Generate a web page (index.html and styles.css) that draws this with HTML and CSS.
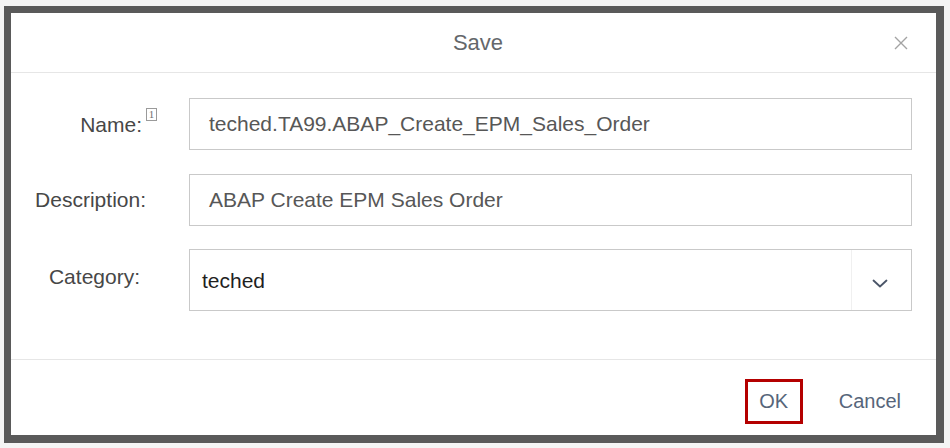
FILE: index.html
```html
<!DOCTYPE html>
<html lang="en">
<head>
<meta charset="utf-8">
<title>Save</title>
<link rel="stylesheet" href="styles.css">
</head>
<body>
<div class="frame">
  <div class="dialog">
    <header class="dlg-head">
      <h1 class="dlg-title">Save</h1>
      <button class="dlg-close" aria-label="Close">
        <svg width="14" height="14" viewBox="0 0 14 14"><path d="M1 1 L13 13 M13 1 L1 13" stroke="#a3a3a3" stroke-width="1.4" fill="none"/></svg>
      </button>
    </header>
    <main class="dlg-body">
      <div class="row">
        <label class="lbl lbl-name">Name:<span class="sup">1</span></label>
        <div class="field"><span class="field-text">teched.TA99.ABAP_Create_EPM_Sales_Order</span></div>
      </div>
      <div class="row">
        <label class="lbl lbl-desc">Description:</label>
        <div class="field"><span class="field-text">ABAP Create EPM Sales Order</span></div>
      </div>
      <div class="row">
        <label class="lbl lbl-cat">Category:</label>
        <div class="field field-select">
          <span class="select-text">teched</span>
          <span class="select-btn">
            <svg width="16" height="9" viewBox="0 0 16 9"><path d="M1.5 1.5 L8 7.5 L14.5 1.5" stroke="#4a5568" stroke-width="1.8" fill="none" stroke-linecap="round" stroke-linejoin="round"/></svg>
          </span>
        </div>
      </div>
    </main>
    <footer class="dlg-foot">
      <button class="btn btn-ok">OK</button>
      <button class="btn btn-cancel">Cancel</button>
    </footer>
  </div>
</div>
</body>
</html>
```

FILE: styles.css
```css
html, body {
  margin: 0;
  padding: 0;
  background: #f5f5f5;
  font-family: "Liberation Sans", Arial, sans-serif;
}
.frame {
  margin: 6px 0 0 4px;
  width: 925px;
  height: 422px;
  border-style: solid;
  border-color: #5a5a5a;
  border-width: 7px 8px 8px 7px;
  background: #fff;
}
.dialog {
  display: flex;
  flex-direction: column;
  height: 100%;
}
.dlg-head {
  height: 59px;
  border-bottom: 1px solid #e6e6e6;
  display: flex;
  align-items: center;
  justify-content: center;
  position: relative;
  padding-left: 9px;
}
.dlg-title {
  margin: 0;
  font-size: 22px;
  font-weight: normal;
  color: #64676b;
}
.dlg-close {
  position: absolute;
  right: 28px;
  top: 23px;
  background: none;
  border: 0;
  padding: 0;
  width: 14px;
  height: 14px;
  display: flex;
}
.dlg-body {
  flex: 1;
  padding: 25px 24px 0 0;
  display: flex;
  flex-direction: column;
  gap: 24px;
}
.row {
  display: grid;
  grid-template-columns: 178px 1fr;
  align-items: center;
}
.row:last-child { margin-top: -1px; }
.lbl {
  text-align: right;
  font-size: 21px;
  color: #474747;
  white-space: nowrap;
}
.lbl-name { padding-right: 32px; position: relative; top: 1px; }
.lbl-desc { padding-right: 43px; }
.lbl-cat { padding-right: 49px; position: relative; top: -3px; }
.sup {
  display: inline-block;
  width: 9px;
  height: 11px;
  border: 1px solid #9a9a9a;
  font-family: "Liberation Serif", serif;
  font-size: 11px;
  line-height: 11px;
  text-align: center;
  color: #6f6f6f;
  vertical-align: top;
  position: relative;
  top: -5px;
  margin-left: 4px;
}
.field {
  height: 52px;
  box-sizing: border-box;
  border: 1px solid #c9c9c9;
  display: flex;
  align-items: center;
  padding-left: 19px;
}
.field-text {
  font-size: 21px;
  color: #575757;
}
.field-select {
  height: 62px;
  padding-left: 12px;
}
.select-text {
  flex: 1;
  font-size: 21px;
  color: #1f1f1f;
  position: relative;
  top: 1px;
}
.select-btn {
  width: 60px;
  height: 100%;
  border-left: 1px solid #f0f0f0;
  display: flex;
  align-items: center;
  justify-content: center;
  padding-right: 4px;
  padding-top: 6px;
  box-sizing: border-box;
}
.dlg-foot {
  height: 76px;
  border-top: 1px solid #e6e6e6;
  box-sizing: border-box;
  display: flex;
  justify-content: flex-end;
  align-items: center;
  padding: 7px 35px 0 0;
  gap: 36px;
}
.btn {
  background: none;
  border: 0;
  padding: 0;
  font-family: "Liberation Sans", Arial, sans-serif;
  font-size: 20px;
  color: #56657a;
}
.btn-ok {
  width: 58px;
  height: 45px;
  box-sizing: border-box;
  border: 3px solid #b40000;
  font-size: 20px;
}
```
